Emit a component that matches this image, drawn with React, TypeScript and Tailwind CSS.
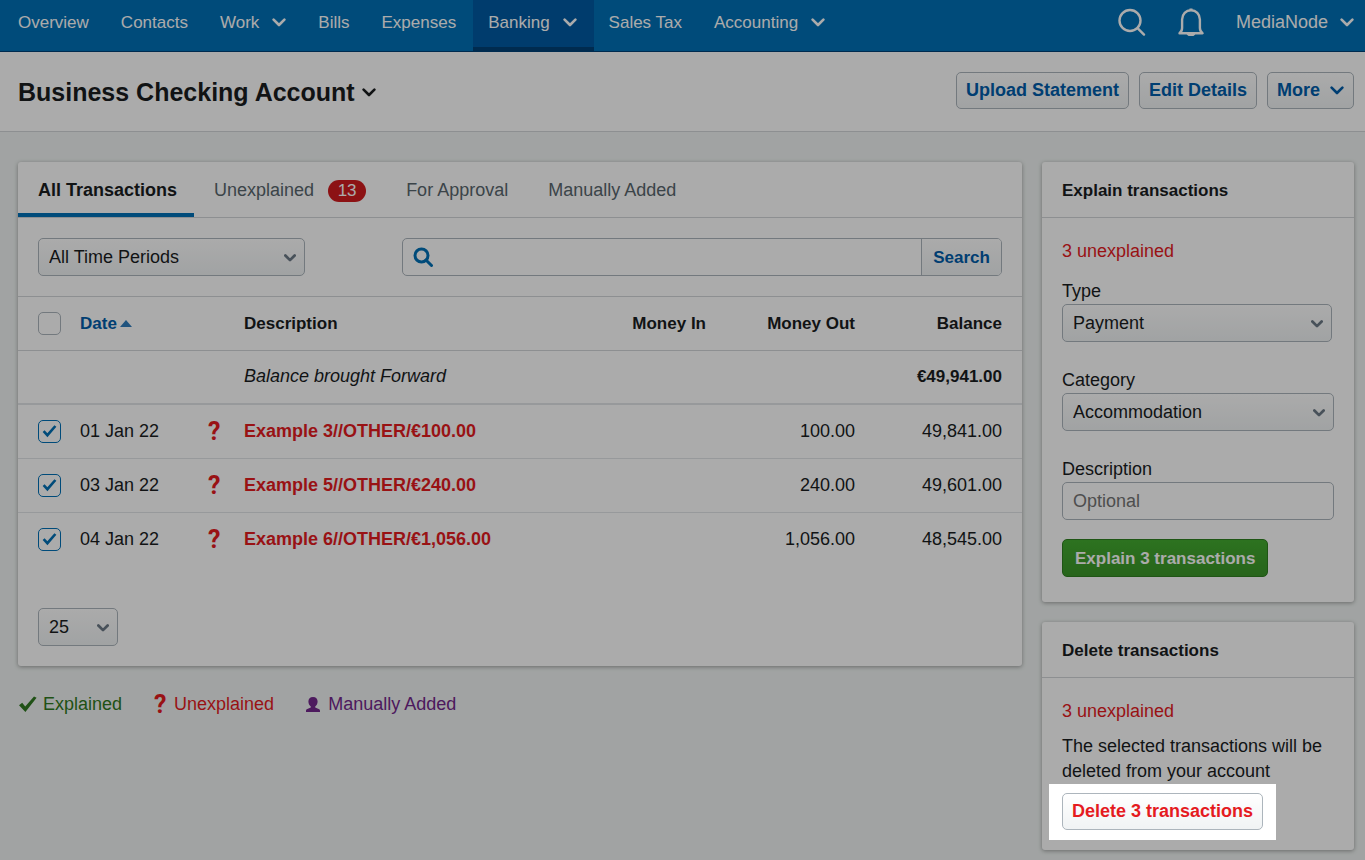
import React, { useState } from 'react';
import clsx from 'clsx';

interface NavEntry {
    label: string;
    menu?: boolean;
    active?: boolean;
}

interface Transaction {
    id: number;
    date: string;
    description: string;
    moneyOut: string;
    balance: string;
}

const NAV: NavEntry[] = [
    { label: 'Overview' },
    { label: 'Contacts' },
    { label: 'Work', menu: true },
    { label: 'Bills' },
    { label: 'Expenses' },
    { label: 'Banking', menu: true, active: true },
    { label: 'Sales Tax' },
    { label: 'Accounting', menu: true },
];

const TRANSACTIONS: Transaction[] = [
    { id: 1, date: '01 Jan 22', description: 'Example 3//OTHER/€100.00', moneyOut: '100.00', balance: '49,841.00' },
    { id: 2, date: '03 Jan 22', description: 'Example 5//OTHER/€240.00', moneyOut: '240.00', balance: '49,601.00' },
    { id: 3, date: '04 Jan 22', description: 'Example 6//OTHER/€1,056.00', moneyOut: '1,056.00', balance: '48,545.00' },
];

const Chevron = ({ className }: { className?: string }) => (
    <svg viewBox="0 0 14 9" className={clsx('shrink-0', className)} fill="none" stroke="currentColor" strokeWidth="2.6" strokeLinecap="round" strokeLinejoin="round" aria-hidden="true">
        <path d="M1.6 1.6 7 7l5.4-5.4" />
    </svg>
);

const QuestionMark = () => (
    <span className="block w-[12px] pt-[2px] text-center font-['Roboto',sans-serif] text-[25px] leading-[26px] font-bold text-[#e51b1f]" aria-hidden="true">?</span>
);

interface SelectProps {
    id: string;
    options: string[];
    className?: string;
    label?: string;
}

const Select = ({ id, options, className, label }: SelectProps) => (
    <div className={clsx('relative', className)}>
        <select
            id={id}
            aria-label={label}
            className="h-[38px] w-full appearance-none rounded-[5px] border border-[#acb5bc] bg-linear-to-b from-white to-[#f0f3f4] pr-8 pl-[10px] text-[#1a1d1f]"
        >
            {options.map((option) => <option key={option}>{option}</option>)}
        </select>
        <Chevron className="pointer-events-none absolute top-[16px] right-[9px] h-[8px] w-[12px] stroke-[3.2] text-[#6c7a86]" />
    </div>
);

const Checkbox = ({ label, checked, onChange }: { label: string; checked: boolean; onChange: () => void }) => (
    <span className="relative block size-[23px]">
        <input
            type="checkbox"
            aria-label={label}
            checked={checked}
            onChange={onChange}
            className="block size-[23px] appearance-none rounded-[5px] border border-[#acb5bc] checked:border-[#0070b6]"
        />
        {checked && (
            <svg viewBox="0 0 23 23" className="pointer-events-none absolute inset-0 text-[#0070b6]" fill="none" stroke="currentColor" strokeWidth="2.6" aria-hidden="true">
                <path d="m5.6 11.2 3.8 4L17.4 6" />
            </svg>
        )}
    </span>
);

const Button = ({ children, className }: { children: React.ReactNode; className?: string }) => (
    <button
        type="button"
        className={clsx(
            'flex h-[37px] items-center rounded-[5px] border border-[#acb5bc] bg-linear-to-b from-white to-[#f0f3f4] px-[9px] font-bold whitespace-nowrap',
            className,
        )}
    >
        {children}
    </button>
);

const Panel = ({ title, children }: { title: string; children: React.ReactNode }) => (
    <section className="rounded-[3px] bg-white shadow-[0_1px_4px_rgba(0,0,0,0.35)]">
        <h2 className="flex h-[56px] items-center border-b border-[#d2d6d9] px-5 pt-px text-[17px] font-bold">{title}</h2>
        {children}
    </section>
);

const Header = () => (
    <header className="flex h-[52px] border-b border-[#004176] bg-[#0070b6] pl-[3px] text-white">
        <nav className="flex flex-1 text-[17px]">
            {NAV.map((entry) => (
                <a
                    key={entry.label}
                    href="#"
                    className={clsx(
                        'flex h-[51px] items-center gap-[13px] pr-[17px] pl-[15px] whitespace-nowrap',
                        entry.active ? 'border-b-4 border-[#004176] bg-[#005aa3] pb-[3px]' : 'pb-[7px]',
                    )}
                >
                    {entry.label}
                    {entry.menu && <Chevron className="h-[9px] w-[14px]" />}
                </a>
            ))}
        </nav>
        <div className="flex items-center gap-8 pr-[11px] pb-[7px]">
            <button type="button" aria-label="Search">
                <svg viewBox="0 0 28 28" className="size-[28px]" fill="none" stroke="currentColor" strokeWidth="2.4" strokeLinecap="round">
                    <circle cx="12" cy="12.5" r="10.5" />
                    <path d="m19.8 20.4 6.2 6.2" />
                </svg>
            </button>
            <button type="button" aria-label="Notifications">
                <svg viewBox="0 0 26 28" className="h-[28px] w-[26px]" fill="none" stroke="currentColor" strokeWidth="2.4" strokeLinejoin="round">
                    <path d="M1.5 25.2c1.8-1.4 2.6-3 2.6-5.2v-8.4C4.1 6 8 2.2 13 2.2S21.9 6 21.9 11.6V20c0 2.2.8 3.800 2.600 5.200Z" />
                    <path d="M11.5 1.6h3M10 26h6l-1.500 1.200h-3Z" />
                </svg>
            </button>
            <a href="#" className="flex items-center gap-[12px]">
                MediaNode
                <Chevron className="h-[9px] w-[14px]" />
            </a>
        </div>
    </header>
);

const TitleBar = () => (
    <div className="flex h-[80px] items-center justify-between border-b border-[#d2d6d9] bg-white pr-[11px] pb-[2px] pl-[18px]">
        <h1 className="pt-1 text-[25px] font-bold">
            <button type="button" className="flex items-center gap-[7px]">
                Business Checking Account
                <Chevron className="h-[9px] w-[14px]" />
            </button>
        </h1>
        <div className="flex gap-[10px] text-[#005daa]">
            <Button>Upload Statement</Button>
            <Button>Edit Details</Button>
            <Button className="gap-[10px]">
                More
                <Chevron className="h-[9px] w-[14px]" />
            </Button>
        </div>
    </div>
);

const TransactionsTable = () => {
    const [selected, setSelected] = useState<number[]>(TRANSACTIONS.map((t) => t.id));
    const [all, setAll] = useState(false);

    const toggle = (id: number) => {
        setSelected((ids) => (ids.includes(id) ? ids.filter((i) => i !== id) : [...ids, id]));
    };

    const toggleAll = () => {
        setSelected(all ? [] : TRANSACTIONS.map((t) => t.id));
        setAll(!all);
    };

    return (
        <table className="w-full table-fixed text-left">
            <colgroup>
                <col className="w-[62px]" />
                <col className="w-[128px]" />
                <col className="w-[36px]" />
                <col />
                <col className="w-[120px]" />
                <col className="w-[149px]" />
                <col className="w-[167px]" />
            </colgroup>
            <thead>
                <tr className="h-[53px] border-b border-[#d2d6d9] text-[17px]">
                    <th className="pl-5"><Checkbox label="Select all" checked={all} onChange={toggleAll} /></th>
                    <th>
                        <button type="button" className="flex items-center gap-[3px] font-bold text-[#005daa]">
                            Date
                            <svg viewBox="0 0 12 7" className="h-[7px] w-[12px]" fill="#2f7dbd" aria-hidden="true"><path d="M6 0l6 7H0z" /></svg>
                        </button>
                    </th>
                    <th />
                    <th>Description</th>
                    <th className="text-right">Money In</th>
                    <th className="text-right">Money Out</th>
                    <th className="pr-5 text-right">Balance</th>
                </tr>
            </thead>
            <tbody>
                <tr className="h-[54px] border-b-2 border-[#e2e5e7]">
                    <td colSpan={3} />
                    <td className="italic">Balance brought Forward</td>
                    <td />
                    <td />
                    <td className="pr-5 text-right text-[17px] font-bold">€49,941.00</td>
                </tr>
                {TRANSACTIONS.map((t) => (
                    <tr key={t.id} className="h-[54px] border-b border-[#e2e5e7] last:border-b-0">
                        <td className="pl-5"><Checkbox label={`Select ${t.description}`} checked={selected.includes(t.id)} onChange={() => toggle(t.id)} /></td>
                        <td>{t.date}</td>
                        <td><QuestionMark /></td>
                        <td><a href="#" className="font-bold text-[#e51b1f]">{t.description}</a></td>
                        <td />
                        <td className="text-right">{t.moneyOut}</td>
                        <td className="pr-5 text-right">{t.balance}</td>
                    </tr>
                ))}
            </tbody>
        </table>
    );
};

const Transactions = () => (
    <section className="rounded-[3px] bg-white shadow-[0_1px_4px_rgba(0,0,0,0.35)]">
        <div className="flex h-[56px] border-b border-[#d2d6d9] text-[#58666d]">
            <a href="#" className="flex items-center border-b-4 border-[#0070b6] pt-[6px] pr-[17px] pl-5 font-bold text-[#1a1d1f]">All Transactions</a>
            <a href="#" className="flex items-center gap-[14px] px-5 pt-[2px]">
                Unexplained
                <span className="flex h-[22px] w-[38px] items-center justify-center rounded-full bg-[#d11c1f] text-[17px] text-white">13</span>
            </a>
            <a href="#" className="flex items-center px-5 pt-[2px]">For Approval</a>
            <a href="#" className="flex items-center px-5 pt-[2px]">Manually Added</a>
        </div>
        <div className="flex justify-between border-b border-[#d2d6d9] p-5">
            <Select id="period" label="Time period" options={['All Time Periods']} className="w-[267px]" />
            <form className="flex h-[38px] w-[600px] rounded-[5px] border border-[#acb5bc]">
                <label htmlFor="search" className="flex items-center pl-[10px] text-[#0070b6]">
                    <svg viewBox="0 0 20 20" className="size-[20px]" fill="none" stroke="currentColor" strokeWidth="3" aria-label="Search transactions">
                        <circle cx="8.5" cy="8.5" r="6.5" />
                        <path d="m13 13 5.5 5.5" strokeLinecap="round" />
                    </svg>
                </label>
                <input id="search" type="text" className="min-w-0 flex-1 px-2 outline-none" />
                <button type="button" className="w-[80px] rounded-r-[4px] border-l border-[#acb5bc] bg-linear-to-b from-white to-[#f0f3f4] text-[17px] font-bold text-[#005daa]">Search</button>
            </form>
        </div>
        <TransactionsTable />
        <div className="px-5 pt-[42px] pb-5">
            <Select id="per-page" label="Rows per page" options={['25', '50', '100']} className="w-[80px]" />
        </div>
    </section>
);

const Legend = () => (
    <ul className="mt-[24px] flex gap-[32px]">
        <li className="flex items-center gap-[5px] text-[#317a22]">
            <svg viewBox="0 0 20 18" className="h-[18px] w-[20px]" fill="currentColor" aria-hidden="true">
                <path d="M1 10.2 4.200 7.800l3 3.800L16 1.600l2.600 1.200L7.400 17Z" />
            </svg>
            Explained
        </li>
        <li className="flex items-center gap-2 text-[#e51b1f]">
            <QuestionMark />
            Unexplained
        </li>
        <li className="flex items-center gap-2 text-[#73278c]">
            <svg viewBox="0 0 14 15" className="h-[15px] w-[14px]" fill="currentColor" aria-hidden="true">
                <path d="M7 0C4 0 2.400 2 2.400 4.600c0 2.200 1 3.900 2.400 4.900v1L1.300 12C.4 12.400 0 13 0 14v1h14v-1c0-1-.4-1.600-1.300-2l-3.500-1.500v-1c1.400-1 2.400-2.700 2.400-4.900C11.600 2 10 0 7 0Z" />
            </svg>
            Manually Added
        </li>
    </ul>
);

const ExplainPanel = () => (
    <Panel title="Explain transactions">
        <form className="px-5 pt-[21px] pb-[25px]">
            <p className="text-[#e51b1f]">3 unexplained</p>
            <div className="mt-[14px] flex flex-col gap-[25px]">
                <div>
                    <label htmlFor="type" className="block leading-[26px]">Type</label>
                    <Select id="type" options={['Payment']} className="w-[270px]" />
                </div>
                <div>
                    <label htmlFor="category" className="block leading-[26px]">Category</label>
                    <Select id="category" options={['Accommodation']} />
                </div>
                <div>
                    <label htmlFor="description" className="block leading-[26px]">Description</label>
                    <input id="description" type="text" placeholder="Optional" className="h-[38px] w-full rounded-[5px] border border-[#acb5bc] px-[10px] placeholder:text-[#757575]" />
                </div>
            </div>
            <button type="button" className="mt-[19px] h-[38px] rounded-[5px] border border-[#2f7f20] bg-linear-to-b from-[#43ab30] to-[#3b9629] px-[12px] text-[17px] font-bold text-white">
                Explain 3 transactions
            </button>
        </form>
    </Panel>
);

const DeletePanel = () => (
    <Panel title="Delete transactions">
        <div className="px-5 pt-[21px] pb-[10px]">
            <p className="text-[#e51b1f]">3 unexplained</p>
            <p className="mt-[10px]">The selected transactions will be deleted from your account</p>
            {/* Spotlight: the spread shadow dims everything around the button */}
            <div className="relative z-10 -ml-[13px] w-fit bg-white px-[13px] pt-[9px] pb-[10px] shadow-[0_0_0_4000px_rgba(0,0,0,0.33)]">
                <Button className="text-[#e51b1f]">Delete 3 transactions</Button>
            </div>
        </div>
    </Panel>
);

export default function App() {
    return (
        <div className="min-h-screen overflow-x-hidden bg-[#f0f4f3] font-['Liberation_Sans',Arial,sans-serif] text-[18px] leading-[25px] text-[#1a1d1f]">
            <Header />
            <TitleBar />
            <div className="flex items-start gap-5 pt-[30px] pr-[11px] pb-[10px] pl-[18px]">
                <main className="min-w-0 flex-1">
                    <Transactions />
                    <Legend />
                </main>
                <aside className="flex w-[312px] flex-col gap-5">
                    <ExplainPanel />
                    <DeletePanel />
                </aside>
            </div>
        </div>
    );
}
